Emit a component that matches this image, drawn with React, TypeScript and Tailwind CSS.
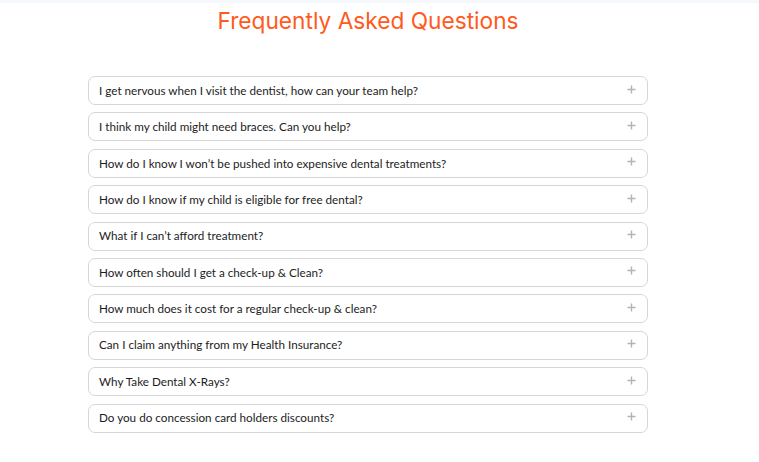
import React from 'react';

const questions = [
  'I get nervous when I visit the dentist, how can your team help?',
  'I think my child might need braces. Can you help?',
  'How do I know I won\u2019t be pushed into expensive dental treatments?',
  'How do I know if my child is eligible for free dental?',
  'What if I can\u2019t afford treatment?',
  'How often should I get a check-up & Clean?',
  'How much does it cost for a regular check-up & clean?',
  'Can I claim anything from my Health Insurance?',
  'Why Take Dental X-Rays?',
  'Do you do concession card holders discounts?',
];

function FaqItem({ text }: { text: string }) {
  return (
    <div className="h-[29px] flex items-center justify-between border border-[#d6d6d6] rounded-[7px] pl-[10px] pr-[11px] bg-white">
      <span className="text-[11.7px] text-[#1c1c1c] font-['Lato',sans-serif]">{text}</span>
      <svg width="9" height="9" viewBox="0 0 9 9" className="-mt-[3px]">
        <path d="M4.5 0.5v8M0.5 4.5h8" stroke="#b3b3b3" strokeWidth="1.4" />
      </svg>
    </div>
  );
}

export default function App() {
  return (
    <div className="w-[759px] h-[462px] bg-white overflow-hidden">
      {/* top strip */}
      <div className="h-[3px] bg-[#f5f9fe]" />

      {/* Title */}
      <h1 className="mt-[4px] w-[736px] text-center text-[22.7px] leading-[28px] text-[#ff5a1e] font-['Inter',sans-serif]">
        Frequently Asked Questions
      </h1>

      {/* FAQ list */}
      <div className="mt-[41px] ml-[88px] w-[560px] flex flex-col gap-[7.4px]">
        {questions.map((q) => (
          <FaqItem key={q} text={q} />
        ))}
      </div>
    </div>
  );
}
